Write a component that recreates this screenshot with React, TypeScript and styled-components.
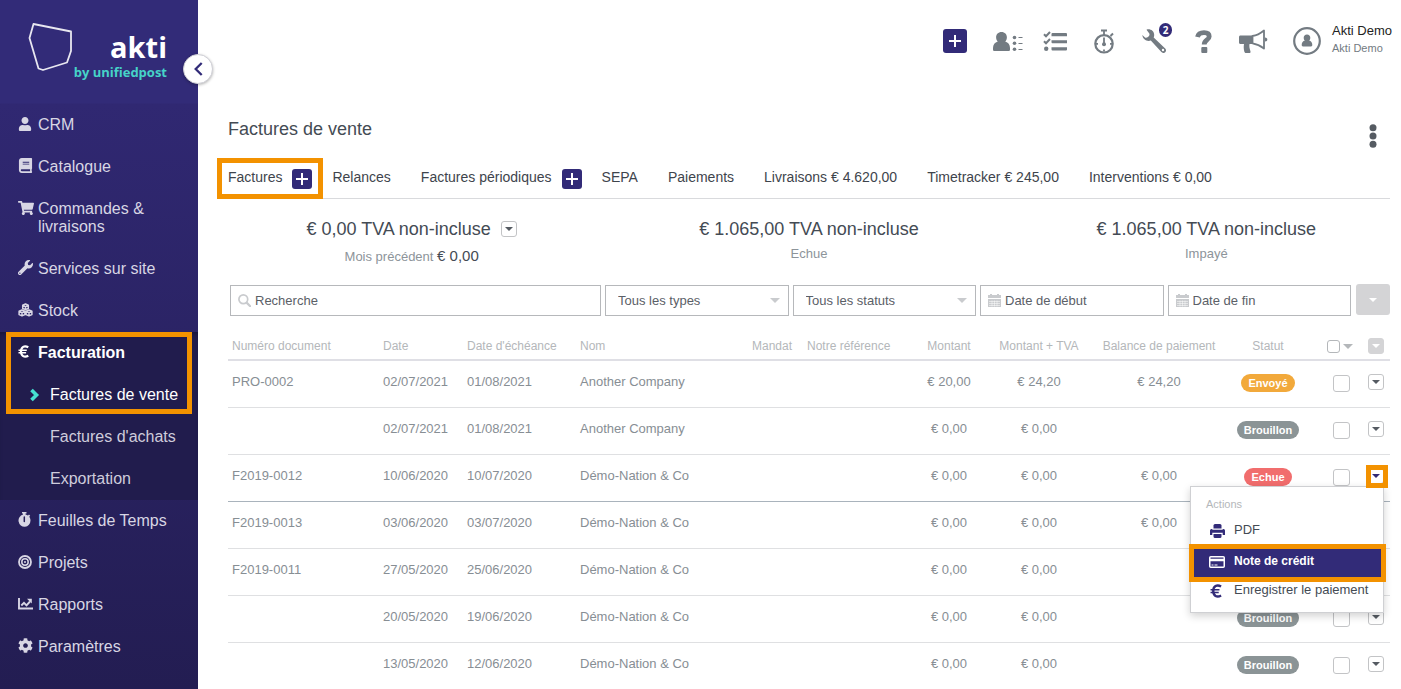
import React from "react";
import styled, { createGlobalStyle, css } from "styled-components";
import { FaUser, FaBook, FaShoppingCart, FaWrench, FaCog } from "react-icons/fa";

const sans = `"Liberation Sans", Arial, sans-serif`;
const brand = "#322b78";
const accent = "#f39200";

const GlobalStyle = createGlobalStyle`
  *, *::before, *::after { box-sizing: border-box; }
  html, body { margin: 0; background: #fff; }
  body { font-family: ${sans}; font-size: 13px; line-height: 16px; color: #444b54; overflow-x: hidden; }
  button, input, select { font: inherit; }
  a { color: inherit; text-decoration: none; }
`;

const Page = styled.div`
  display: flex;
  height: 100vh;
  overflow: hidden;
`;

/* ---------- Sidebar ---------- */

const Sidebar = styled.aside`
  position: relative;
  flex: 0 0 198px;
  background: linear-gradient(#322b78 0, #322b78 103px, #302872 104px, #231d52 100%);
`;

const Brand = styled.a`
  display: flex;
  height: 104px;
  padding: 23px 31px 0 28px;
  justify-content: space-between;
`;

const BrandShape = styled.svg`
  flex: 0 0 45px;
`;

const BrandText = styled.span`
  display: flex;
  flex-direction: column;
  align-items: flex-end;
  padding-top: 8px;
  font-family: "Open Sans", sans-serif;
  font-weight: 700;
  color: #fff;
  white-space: nowrap;
`;

const BrandName = styled.span`
  font-size: 29px;
  line-height: 32px;
`;

const BrandTag = styled.span`
  font-size: 13px;
  line-height: 18px;
  margin-left: -20px;
  color: #46d3c8;
`;

const Collapse = styled.button`
  position: absolute;
  top: 54px;
  right: -15px;
  width: 30px;
  height: 30px;
  padding: 0;
  display: grid;
  place-items: center;
  border: 1px solid #cfcfd6;
  border-radius: 50%;
  background: #fff;
  color: ${brand};
  box-shadow: 0 1px 3px rgba(0, 0, 0, 0.3);
`;

const NavLink = styled.a<{ $active?: boolean }>`
  display: flex;
  padding: 12px 8px 12px 18px;
  font-size: 16px;
  line-height: 18px;
  color: ${(p) => (p.$active ? "#fff" : "#d8d6e4")};
  font-weight: ${(p) => (p.$active ? 700 : 400)};
`;

const NavIcon = styled.span`
  display: flex;
  align-items: center;
  flex: 0 0 20px;
  height: 15px;
`;

const NavGroup = styled.div`
  position: relative;
  background: #211c4d;
  box-shadow: inset 0 4px 4px -2px rgba(0, 0, 0, 0.25);
`;

const SubLink = styled.a<{ $active?: boolean }>`
  display: flex;
  align-items: center;
  padding: 12px 0 12px 30px;
  font-size: 16px;
  line-height: 18px;
  color: ${(p) => (p.$active ? "#fff" : "#cfccdc")};
`;

const SubMark = styled.span`
  display: flex;
  flex: 0 0 20px;
  color: #46e0d0;
`;

const Highlight = styled.span<{ $top: number; $right: number; $bottom: number; $left: number }>`
  position: absolute;
  z-index: 3;
  top: ${(p) => p.$top}px;
  right: ${(p) => p.$right}px;
  bottom: ${(p) => p.$bottom}px;
  left: ${(p) => p.$left}px;
  border: 5px solid ${accent};
  pointer-events: none;
`;

/* ---------- Top bar ---------- */

const Main = styled.main`
  flex: 1;
  min-width: 0;
  padding: 0 11px 0 30px;
`;

const TopBar = styled.header`
  display: flex;
  justify-content: flex-end;
  align-items: center;
  height: 82px;
  margin-right: -2px;
  color: #737b82;
`;

const PlusButton = styled.button<{ $size: number }>`
  flex: none;
  width: ${(p) => p.$size}px;
  height: ${(p) => p.$size}px;
  padding: 0;
  display: grid;
  place-items: center;
  border: 0;
  border-radius: 3px;
  background: ${brand};
  color: #fff;
`;

const TopTools = styled.nav`
  display: flex;
  align-items: center;
  margin-right: 11px;
`;

const ToolButton = styled.button<{ $gap: number }>`
  position: relative;
  height: 30px;
  padding: 0;
  margin-left: ${(p) => p.$gap}px;
  border: 0;
  background: none;
  color: inherit;
  display: grid;
  place-items: center;
`;

const Count = styled.span`
  position: absolute;
  top: -3px;
  right: -6px;
  width: 13px;
  height: 14px;
  border-radius: 7px;
  background: ${brand};
  color: #fff;
  font: 700 10px/14px "Open Sans", sans-serif;
  text-align: center;
`;

const Account = styled.a`
  display: flex;
  flex-direction: column;
  padding-bottom: 4px;
`;

const AccountName = styled.span`
  font-size: 13px;
  line-height: 18px;
  color: #222;
`;

const AccountOrg = styled.span`
  font-size: 11px;
  line-height: 16px;
  color: #737b82;
`;

/* ---------- Heading and tabs ---------- */

const Heading = styled.div`
  display: flex;
  justify-content: space-between;
  align-items: flex-start;
  height: 76px;
  padding-top: 36px;
`;

const Title = styled.h1`
  margin: 0;
  font-size: 18px;
  line-height: 22px;
  font-weight: 400;
  color: #444b54;
`;

const MoreButton = styled.button`
  display: grid;
  place-items: center;
  width: 12px;
  height: 28px;
  margin: 4px 11px 0 0;
  padding: 0;
  border: 0;
  background: none;
  color: #555b62;
`;

const Tabs = styled.nav`
  display: flex;
  align-items: center;
  gap: 30px;
  height: 41px;
  border-bottom: 1px solid #d9dadd;
  font-size: 14px;
  color: #3e444c;
`;

const Tab = styled.div<{ $add?: boolean }>`
  position: relative;
  display: flex;
  align-items: center;
  gap: 10px;
  height: 40px;
  padding-top: 2px;
  margin-right: ${(p) => (p.$add ? -10 : 0)}px;
  white-space: nowrap;

  & > a {
    margin-bottom: 4px;
  }
`;

/* ---------- Summary ---------- */

const Summary = styled.section`
  display: grid;
  grid-template-columns: repeat(3, 1fr);
  margin: 0 -15px;
  padding-top: 19px;
  height: 86px;
  text-align: center;
`;

const Figure = styled.div`
  font-size: 18px;
  line-height: 22px;
  color: #444b54;
  display: flex;
  align-items: center;
  justify-content: center;
  gap: 10px;
`;

const FigureNote = styled.div`
  margin-top: 5px;
  font-size: 13px;
  line-height: 18px;
  color: #8d949a;
`;

const FigureNoteLow = styled(FigureNote)`
  margin-top: 7px;

  b {
    font-size: 15px;
    font-weight: 400;
    color: #444b54;
  }
`;

/* ---------- Filters ---------- */

const Filters = styled.form`
  display: flex;
  gap: 5px;
  padding-left: 2px;
`;

const FilterGrid = styled.div`
  flex: 1;
  display: grid;
  grid-template-columns: repeat(6, minmax(0, 1fr));
  gap: 4px;
`;

const Field = styled.label<{ $span?: number }>`
  grid-column: span ${(p) => p.$span || 1};
  display: flex;
  align-items: center;
  gap: 4px;
  min-width: 0;
  height: 31px;
  padding: 0 8px 0 7px;
  border: 1px solid #b6b8bb;
  color: #c9cbce;
`;

const TextInput = styled.input`
  flex: 1;
  min-width: 0;
  padding: 0;
  border: 0;
  outline: 0;
  background: none;
  color: #5b6067;

  &::placeholder {
    color: #5b6067;
    opacity: 1;
  }
`;

const Select = styled.select`
  flex: 1;
  min-width: 0;
  padding: 0 0 0 5px;
  border: 0;
  outline: 0;
  appearance: none;
  background: none;
  color: #5b6067;
`;

const FilterButton = styled.button`
  flex: 0 0 34px;
  height: 31px;
  margin-top: -1px;
  padding: 0;
  display: grid;
  place-items: center;
  border: 0;
  border-radius: 3px;
  background: #d4d4d6;
  color: #fff;
`;

/* ---------- Table ---------- */

const Table = styled.table`
  width: 100%;
  margin-top: 13px;
  border-collapse: separate;
  border-spacing: 0;
  table-layout: fixed;
`;

type Align = "left" | "center";

const Th = styled.th<{ $align?: Align }>`
  height: 32px;
  padding: 4px 0 0 ${(p) => (p.$align === "center" ? 0 : 4)}px;
  border-bottom: 2px solid #dfdfe5;
  font-size: 12px;
  line-height: 14px;
  font-weight: 400;
  text-align: ${(p) => p.$align || "left"};
  color: #b4b7ba;
  white-space: nowrap;
`;

const Row = styled.tr<{ $marked?: boolean }>`
  & > td {
    border-bottom: 1px solid ${(p) => (p.$marked ? "#a9b3bc" : "#dfe0e2")};
  }
`;

const Td = styled.td<{ $align?: Align }>`
  height: 47px;
  padding: 13px 0 0 ${(p) => (p.$align === "center" ? 0 : 4)}px;
  vertical-align: top;
  text-align: ${(p) => p.$align || "left"};
  color: #878e94;
  white-space: nowrap;
`;

const tones = { orange: "#f2a93b", grey: "#8b9496", red: "#f16d6d" };

const Badge = styled.span<{ $tone: keyof typeof tones }>`
  display: inline-block;
  height: 18px;
  padding: 0 7px;
  border-radius: 9px;
  background: ${(p) => tones[p.$tone]};
  color: #fff;
  font-size: 11px;
  line-height: 18px;
  font-weight: 700;
`;

const box = css`
  appearance: none;
  display: block;
  margin: 0;
  border: 1px solid #c3c4c6;
  border-radius: 3px;
  background: #fff;
`;

const RowCheck = styled.input`
  ${box}
  width: 17px;
  height: 17px;
  margin: 1px 0 0 26px;
`;

const HeadCheck = styled.input`
  ${box}
  width: 13px;
  height: 13px;
  border-color: #b4b7ba;
`;

const HeadCheckGroup = styled.span`
  display: flex;
  align-items: center;
  gap: 3px;
  padding-left: 20px;
`;

const CaretButton = styled.button<{ $filled?: boolean; $open?: boolean }>`
  flex: none;
  display: grid;
  place-items: center;
  width: 16px;
  height: 16px;
  padding: 0;
  border: 1px solid ${(p) => (p.$filled ? "#d4d4d6" : "#c3c4c6")};
  border-radius: 3px;
  background: ${(p) => (p.$filled ? "#d4d4d6" : "#fff")};
  color: ${(p) => (p.$filled ? "#fff" : p.$open ? brand : "#555b62")};
`;

const ActionCell = styled.div`
  position: relative;
  width: 16px;
  margin: 0 auto;
`;

const Menu = styled.div`
  position: absolute;
  z-index: 2;
  top: 18px;
  right: 0;
  width: 194px;
  height: 127px;
  padding-top: 9px;
  border: 1px solid #cfd0d3;
  background: #fff;
  box-shadow: 0 3px 8px rgba(0, 0, 0, 0.18);
  text-align: left;
`;

const MenuTitle = styled.div`
  padding-left: 15px;
  margin-bottom: 3px;
  font-size: 11px;
  line-height: 16px;
  color: #b4b7ba;
`;

const MenuItem = styled.button<{ $active?: boolean }>`
  position: relative;
  display: flex;
  align-items: center;
  width: calc(100% - 5px);
  height: ${(p) => (p.$active ? 28 : 30)}px;
  margin: ${(p) => (p.$active ? "4px 2px -2px 3px" : "0 2px 0 3px")};
  padding: 0 0 ${(p) => (p.$active ? 5 : 0)}px 15px;
  border: 0;
  background: ${(p) => (p.$active ? brand : "none")};
  color: ${(p) => (p.$active ? "#fff" : "#444b54")};
  font-size: ${(p) => (p.$active ? 12 : 13)}px;
  font-weight: ${(p) => (p.$active ? 700 : 400)};
  white-space: nowrap;
`;

const MenuIcon = styled.span<{ $active?: boolean }>`
  display: flex;
  justify-content: center;
  flex: 0 0 16px;
  margin: 2px 9px 0 0;
  color: ${(p) => (p.$active ? "#fff" : brand)};
`;

/* ---------- Drawings ---------- */

const Caret = ({ w = 8, h = 4 }: { w?: number; h?: number }) => (
  <svg width={w} height={h} viewBox="0 0 8 4" preserveAspectRatio="none" aria-hidden>
    <path d="M0 0h8L4 4z" fill="currentColor" />
  </svg>
);

const Plus = () => (
  <svg width="12" height="12" viewBox="0 0 12 12" aria-hidden>
    <path d="M6 0v12M0 6h12" stroke="currentColor" strokeWidth="2" />
  </svg>
);

const SearchIcon = () => (
  <svg width="13" height="13" viewBox="0 0 13 13" fill="none" stroke="currentColor" aria-hidden>
    <circle cx="5.300" cy="5.300" r="4.400" strokeWidth="1.700" />
    <path d="M8.600 8.600l3.600 3.600" strokeWidth="2.200" strokeLinecap="round" />
  </svg>
);

const CalendarIcon = () => (
  <svg width="13" height="13" viewBox="0 0 13 13" aria-hidden>
    <path d="M0 1h13v3H0zM2 0h2v2H2zM9 0h2v2H9zM0 5h13v8H0z" fill="currentColor" />
    <path d="M1 7.500h11M1 9.500h11M1 11.500h11M4 6.500v6M6.500 6.500v6M9 6.500v6" stroke="#fff" strokeWidth=".5" />
  </svg>
);

const ChevronMark = () => (
  <svg width="10" height="14" viewBox="0 0 10 14" aria-hidden>
    <path d="M1.500 2l5 5-5 5" fill="none" stroke="currentColor" strokeWidth="3.600" />
  </svg>
);

const ChevronBack = () => (
  <svg width="9" height="14" viewBox="0 0 9 14" aria-hidden>
    <path d="M7.700 1L1.700 7l6 6" fill="none" stroke="currentColor" strokeWidth="2.300" />
  </svg>
);

const EuroIcon = ({ size = 13 }: { size?: number }) => (
  <svg width={size} height={size} viewBox="0 0 13 13" fill="none" stroke="currentColor" aria-hidden>
    <path d="M10.300 2.300C6.300 0 3 2.200 3 6.500s3.300 6.500 7.300 4.200" strokeWidth="2.200" />
    <path d="M.5 5.300h8.300M.5 7.800h7.600" strokeWidth="1.400" />
  </svg>
);

const PrintIcon = () => (
  <svg width="15" height="14" viewBox="0 0 15 14" fill="currentColor" aria-hidden>
    <path d="M5 0h5a1.500 1.500 0 0 1 1.500 1.500V4.500h-8V1.500A1.500 1.500 0 0 1 5 0z" />
    <path d="M0 11V6.500A1.500 1.500 0 0 1 1.500 5h.8v.8h10.400V5h.8A1.500 1.500 0 0 1 15 6.500V11h-2.300V8.800H2.300V11z" />
    <path d="M3.500 10h8v2.500A1.500 1.500 0 0 1 10 14H5a1.500 1.500 0 0 1-1.500-1.500z" />
  </svg>
);

const ContactsIcon = () => (
  <svg width="31" height="22" viewBox="0 0 31 22" fill="currentColor" aria-hidden>
    <path d="M8.500 2c3.300 0 5.400 2.300 5.400 5.200 0 1.900-.6 3.300-1.700 4.300 3 1 4.800 3.100 4.800 6.500v1.500c0 1-.7 1.500-1.600 1.500H1.600C.7 21 0 20.500 0 19.500V18c0-3.400 1.800-5.500 4.800-6.500-1.100-1-1.700-2.400-1.700-4.300C3.100 4.300 5.200 2 8.500 2z" />
    <circle cx="21.500" cy="7.500" r="1.800" />
    <circle cx="21.500" cy="13.300" r="1.800" />
    <circle cx="21.500" cy="19.200" r="1.800" />
    <path d="M25.500 7h4v1h-4zM25.500 13h4v1h-4zM25.500 19h4v1h-4z" />
  </svg>
);

const ChecklistIcon = () => (
  <svg width="24" height="22" viewBox="0 0 24 22" fill="currentColor" aria-hidden>
    <path d="M9.500 3H23a1 1 0 0 1 1 1v2.200H8.500V4a1 1 0 0 1 1-1zM8.500 10.200H24v3H9.500a1 1 0 0 1-1-1zM8.500 17.200H24v2.300a1 1 0 0 1-1 1H9.500a1 1 0 0 1-1-1z" />
    <path d="M1 4.300l2 2L7 2M1 11.300l2 2L7 9" fill="none" stroke="currentColor" strokeWidth="2" />
    <circle cx="3.200" cy="18.800" r="2.200" />
  </svg>
);

const StopwatchIcon = () => (
  <svg width="22" height="25" viewBox="0 0 22 25" fill="none" stroke="currentColor" aria-hidden>
    <circle cx="11" cy="14.800" r="8.700" strokeWidth="2.200" />
    <path d="M8 1.500h6M17.500 7L20 4.500" strokeWidth="2" />
    <path d="M11 2v4M11 8.500v6M11 20.500v2M3 14.800h2M17 14.800h2" strokeWidth="1.800" />
    <circle cx="11" cy="15.300" r="2" fill="currentColor" stroke="none" />
  </svg>
);

const ToolWrenchIcon = () => (
  <svg width="24" height="24" viewBox="0 0 24 24" aria-hidden>
    <path
      d="M4.500.7c3.400-1.200 7.700 1 7.700 5.300 0 1-.2 1.700-.5 2.500l11.500 11c1.200 1.200 1 2.800 0 3.800-1.100 1-2.700 1-3.800-.2L8.800 11.600c-3.900 1.200-8-1-8.500-5.600L3 8.500c1.500 1.200 5.500-1.700 4.300-4z"
      fill="currentColor"
    />
    <circle cx="21" cy="21" r="1.200" fill="#fff" />
  </svg>
);

const QuestionIcon = () => (
  <svg width="18" height="24" viewBox="0 0 18 24" aria-hidden>
    <path d="M2.500 8C3.200 5 5.600 3.700 9 3.700c3.200 0 5.200 1.200 5.200 3.800 0 3.500-5 3.500-5 8" fill="none" stroke="currentColor" strokeWidth="4.800" />
    <rect x="6.300" y="18" width="6" height="6" rx="1" fill="currentColor" />
  </svg>
);

const MegaphoneIcon = () => (
  <svg width="29" height="25" viewBox="0 0 29 25" aria-hidden>
    <path d="M1.500 6.500H13v8.500h-2.500c-.4 2.200 0 4.500 1 7.500.2 1-.4 1.500-1.300 1.500H7c-1 0-1.500-.6-1.700-1.500-.7-3-.7-5-.3-7.500H1.500C.6 15 0 14.400 0 13.500V8c0-.9.600-1.500 1.500-1.500z" fill="currentColor" />
    <path d="M13.500 7c4.500-.6 8-2.700 11.500-5.500v18c-3.500-2.800-7-4.600-11.500-5.200z" fill="#fff" stroke="currentColor" strokeWidth="1.800" strokeLinejoin="round" />
    <path d="M26 8.500c1.800 0 2.300 1 2.300 2s-.5 2-2.300 2z" fill="currentColor" />
  </svg>
);

const AccountIcon = () => (
  <svg width="28" height="28" viewBox="0 0 28 28" aria-hidden>
    <circle cx="14" cy="14" r="12.800" fill="none" stroke="currentColor" strokeWidth="2.200" />
    <path d="M14 7.500c2.100 0 3.300 1.400 3.300 3.300 0 1.200-.4 2.200-1.200 2.800 1.900.6 3.200 1.900 3.200 4.200 0 1.200-.4 1.700-1.300 1.700h-8c-.9 0-1.300-.5-1.300-1.700 0-2.300 1.300-3.600 3.200-4.200-.8-.6-1.200-1.600-1.200-2.800 0-1.900 1.200-3.300 3.300-3.300z" fill="currentColor" />
  </svg>
);

const CubesIcon = () => (
  <svg width="15" height="14" viewBox="0 0 15 14" fill="none" stroke="currentColor" strokeWidth="1.500" strokeLinejoin="round" aria-hidden>
    <path d="M7.500 1l2.800 1.200v3.200L7.500 6.600 4.700 5.400V2.200zM4 7l2.900 1.200v3.400L4 12.800 1.100 11.600V8.200zM11 7l2.900 1.200v3.400L11 12.800l-2.900-1.200V8.200zM4.700 2.500l2.800 1.100 2.800-1.100M1.300 8.500L4 9.600l2.700-1.100M8.300 8.500L11 9.600l2.700-1.100M7.500 3.600v2.800M4 9.600v3M11 9.600v3" />
  </svg>
);

const TimerIcon = () => (
  <svg width="13" height="15" viewBox="0 0 13 15" aria-hidden>
    <path d="M4 0h4.500v1.500H7.500v1c1 .2 1.800.5 2.500 1l1-1 1.200 1.200-1 1C12 5.800 12.500 7 12.500 8.500A6 6.200 0 1 1 5 2.500v-1H4z" fill="currentColor" />
    <path d="M6.300 5v4.500" stroke="#27205a" strokeWidth="1.500" strokeLinecap="round" />
  </svg>
);

const TargetIcon = () => (
  <svg width="14" height="14" viewBox="0 0 14 14" fill="none" stroke="currentColor" strokeWidth="1.800" aria-hidden>
    <circle cx="7" cy="7" r="6" />
    <circle cx="7" cy="7" r="3.200" strokeWidth="1.500" />
    <circle cx="7" cy="7" r="1" fill="currentColor" stroke="none" />
  </svg>
);

const ChartIcon = () => (
  <svg width="15" height="12" viewBox="0 0 15 12" fill="none" stroke="currentColor" strokeWidth="1.900" aria-hidden>
    <path d="M1 0v10.500h14M3.300 7.500l2.700-2.700 2.500 2.500L12 3.500" />
    <path d="M9 .8h4.800v4.700z" fill="currentColor" stroke="none" />
  </svg>
);

const CardIcon = () => (
  <svg width="16" height="12" viewBox="0 0 16 12" aria-hidden>
    <rect x=".75" y=".75" width="14.500" height="10.500" rx="1" fill="none" stroke="currentColor" strokeWidth="1.500" />
    <path d="M1 2.800h14v2.400H1zM2.500 8.500h2v1h-2zM5.500 8.500h3v1h-3z" fill="currentColor" />
  </svg>
);

/* ---------- Data ---------- */

const navTop = [
  { label: "CRM", icon: <FaUser size={14} /> },
  { label: "Catalogue", icon: <FaBook size={15} /> },
  { label: "Commandes & livraisons", icon: <FaShoppingCart size={16} /> },
  { label: "Services sur site", icon: <FaWrench size={15} /> },
  { label: "Stock", icon: <CubesIcon /> },
];

const navBottom = [
  { label: "Feuilles de Temps", icon: <TimerIcon /> },
  { label: "Projets", icon: <TargetIcon /> },
  { label: "Rapports", icon: <ChartIcon /> },
  { label: "Paramètres", icon: <FaCog size={15} /> },
];

const tabs = [
  { label: "Factures", add: true, marked: true },
  { label: "Relances" },
  { label: "Factures périodiques", add: true },
  { label: "SEPA" },
  { label: "Paiements" },
  { label: "Livraisons € 4.620,00" },
  { label: "Timetracker € 245,00" },
  { label: "Interventions € 0,00" },
];

type Invoice = {
  no: string;
  date: string;
  due: string;
  name: string;
  amount: string;
  total: string;
  balance: string;
  status?: [string, keyof typeof tones];
  open?: boolean;
};

const draft: [string, keyof typeof tones] = ["Brouillon", "grey"];

const invoices: Invoice[] = [
  { no: "PRO-0002", date: "02/07/2021", due: "01/08/2021", name: "Another Company", amount: "€ 20,00", total: "€ 24,20", balance: "€ 24,20", status: ["Envoyé", "orange"] },
  { no: "", date: "02/07/2021", due: "01/08/2021", name: "Another Company", amount: "€ 0,00", total: "€ 0,00", balance: "", status: draft },
  { no: "F2019-0012", date: "10/06/2020", due: "10/07/2020", name: "Démo-Nation & Co", amount: "€ 0,00", total: "€ 0,00", balance: "€ 0,00", status: ["Echue", "red"], open: true },
  { no: "F2019-0013", date: "03/06/2020", due: "03/07/2020", name: "Démo-Nation & Co", amount: "€ 0,00", total: "€ 0,00", balance: "€ 0,00" },
  { no: "F2019-0011", date: "27/05/2020", due: "25/06/2020", name: "Démo-Nation & Co", amount: "€ 0,00", total: "€ 0,00", balance: "" },
  { no: "", date: "20/05/2020", due: "19/06/2020", name: "Démo-Nation & Co", amount: "€ 0,00", total: "€ 0,00", balance: "", status: draft },
  { no: "", date: "13/05/2020", due: "12/06/2020", name: "Démo-Nation & Co", amount: "€ 0,00", total: "€ 0,00", balance: "", status: draft },
];

const columns: { label: string; width?: number; align?: Align }[] = [
  { label: "Numéro document", width: 151 },
  { label: "Date", width: 84 },
  { label: "Date d'échéance", width: 113 },
  { label: "Nom" },
  { label: "Mandat", width: 55 },
  { label: "Notre référence", width: 102 },
  { label: "Montant", width: 88, align: "center" },
  { label: "Montant + TVA", width: 92, align: "center" },
  { label: "Balance de paiement", width: 148, align: "center" },
  { label: "Statut", width: 70, align: "center" },
];

const ActionsMenu = () => (
  <Menu role="menu">
    <MenuTitle>Actions</MenuTitle>
    <MenuItem role="menuitem">
      <MenuIcon><PrintIcon /></MenuIcon>
      PDF
    </MenuItem>
    <MenuItem role="menuitem" $active>
      <Highlight $top={-5} $right={-5} $bottom={-5} $left={-5} />
      <MenuIcon $active><CardIcon /></MenuIcon>
      Note de crédit
    </MenuItem>
    <MenuItem role="menuitem">
      <MenuIcon><EuroIcon size={14} /></MenuIcon>
      Enregistrer le paiement
    </MenuItem>
  </Menu>
);

export default function App() {
  return (
    <>
      <GlobalStyle />
      <Page>
        <Sidebar>
          <Brand href="#">
            <BrandShape width="45" height="49" viewBox="0 0 45 49" fill="none" stroke="#e8e7f0" strokeWidth="1.800" strokeLinejoin="round">
              <path d="M5.500 1L43 8.500V28l-4 11.500L15 47l-4.500-1.500L1.500 15z" />
            </BrandShape>
            <BrandText>
              <BrandName>akti</BrandName>
              <BrandTag>by unifiedpost</BrandTag>
            </BrandText>
          </Brand>
          <Collapse aria-label="Réduire le menu">
            <ChevronBack />
          </Collapse>
          <nav>
            {navTop.map((n) => (
              <NavLink href="#" key={n.label}>
                <NavIcon>{n.icon}</NavIcon>
                {n.label}
              </NavLink>
            ))}
            <NavGroup>
              <Highlight $top={0} $right={6} $bottom={86} $left={6} />
              <NavLink href="#" $active>
                <NavIcon><EuroIcon /></NavIcon>
                Facturation
              </NavLink>
              <SubLink href="#" $active>
                <SubMark><ChevronMark /></SubMark>
                Factures de vente
              </SubLink>
              <SubLink href="#"><SubMark />Factures d'achats</SubLink>
              <SubLink href="#"><SubMark />Exportation</SubLink>
            </NavGroup>
            {navBottom.map((n) => (
              <NavLink href="#" key={n.label}>
                <NavIcon>{n.icon}</NavIcon>
                {n.label}
              </NavLink>
            ))}
          </nav>
        </Sidebar>

        <Main>
          <TopBar>
            <TopTools>
              <PlusButton $size={24} aria-label="Ajouter"><Plus /></PlusButton>
              <ToolButton $gap={26} aria-label="Contacts"><ContactsIcon /></ToolButton>
              <ToolButton $gap={19} aria-label="Tâches"><ChecklistIcon /></ToolButton>
              <ToolButton $gap={26} aria-label="Minuterie"><StopwatchIcon /></ToolButton>
              <ToolButton $gap={27} aria-label="Outils"><ToolWrenchIcon /><Count>2</Count></ToolButton>
              <ToolButton $gap={29} aria-label="Aide"><QuestionIcon /></ToolButton>
              <ToolButton $gap={26} aria-label="Annonces"><MegaphoneIcon /></ToolButton>
              <ToolButton $gap={25} aria-label="Compte"><AccountIcon /></ToolButton>
            </TopTools>
            <Account href="#">
              <AccountName>Akti Demo</AccountName>
              <AccountOrg>Akti Demo</AccountOrg>
            </Account>
          </TopBar>

          <Heading>
            <Title>Factures de vente</Title>
            <MoreButton aria-label="Plus d'options">
              <svg width="8" height="24" viewBox="0 0 8 24" fill="currentColor" aria-hidden>
                <circle cx="4" cy="3.700" r="3.500" />
                <circle cx="4" cy="12" r="3.500" />
                <circle cx="4" cy="20.300" r="3.500" />
              </svg>
            </MoreButton>
          </Heading>

          <Tabs>
            {tabs.map((t) => (
              <Tab key={t.label} $add={t.add}>
                {t.marked && <Highlight $top={0} $right={-11} $bottom={-1} $left={-11} />}
                <a href="#">{t.label}</a>
                {t.add && <PlusButton $size={20} aria-label={`Ajouter ${t.label}`}><Plus /></PlusButton>}
              </Tab>
            ))}
          </Tabs>

          <Summary>
            <div>
              <Figure>
                € 0,00 TVA non-incluse
                <CaretButton aria-label="Période"><Caret /></CaretButton>
              </Figure>
              <FigureNoteLow>Mois précédent <b>€ 0,00</b></FigureNoteLow>
            </div>
            <div>
              <Figure>€ 1.065,00 TVA non-incluse</Figure>
              <FigureNote>Echue</FigureNote>
            </div>
            <div>
              <Figure>€ 1.065,00 TVA non-incluse</Figure>
              <FigureNote>Impayé</FigureNote>
            </div>
          </Summary>

          <Filters>
            <FilterGrid>
              <Field $span={2}>
                <SearchIcon />
                <TextInput placeholder="Recherche" aria-label="Recherche" />
              </Field>
              <Field>
                <Select aria-label="Types"><option>Tous les types</option></Select>
                <Caret w={10} h={5} />
              </Field>
              <Field>
                <Select aria-label="Statuts"><option>Tous les statuts</option></Select>
                <Caret w={10} h={5} />
              </Field>
              <Field>
                <CalendarIcon />
                <TextInput placeholder="Date de début" aria-label="Date de début" />
              </Field>
              <Field>
                <CalendarIcon />
                <TextInput placeholder="Date de fin" aria-label="Date de fin" />
              </Field>
            </FilterGrid>
            <FilterButton type="button" aria-label="Plus de filtres"><Caret /></FilterButton>
          </Filters>

          <Table>
            <colgroup>
              {columns.map((c) => <col key={c.label} width={c.width} />)}
              <col width={59} />
              <col width={28} />
            </colgroup>
            <thead>
              <tr>
                {columns.map((c) => <Th key={c.label} $align={c.align}>{c.label}</Th>)}
                <Th>
                  <HeadCheckGroup>
                    <HeadCheck type="checkbox" aria-label="Tout sélectionner" />
                    <Caret w={10} h={5} />
                  </HeadCheckGroup>
                </Th>
                <Th $align="center">
                  <ActionCell><CaretButton $filled aria-label="Colonnes"><Caret /></CaretButton></ActionCell>
                </Th>
              </tr>
            </thead>
            <tbody>
              {invoices.map((r, i) => (
                <Row key={i} $marked={r.open}>
                  <Td>{r.no}</Td>
                  <Td>{r.date}</Td>
                  <Td>{r.due}</Td>
                  <Td>{r.name}</Td>
                  <Td />
                  <Td />
                  <Td $align="center">{r.amount}</Td>
                  <Td $align="center">{r.total}</Td>
                  <Td $align="center">{r.balance}</Td>
                  <Td $align="center">{r.status && <Badge $tone={r.status[1]}>{r.status[0]}</Badge>}</Td>
                  <Td><RowCheck type="checkbox" aria-label={`Sélectionner ${r.no || r.date}`} /></Td>
                  <Td $align="center">
                    <ActionCell>
                      <CaretButton $open={r.open} aria-label="Actions"><Caret /></CaretButton>
                      {r.open && <Highlight $top={-3} $right={-4} $bottom={-4} $left={-2} />}
                      {r.open && <ActionsMenu />}
                    </ActionCell>
                  </Td>
                </Row>
              ))}
            </tbody>
          </Table>
        </Main>
      </Page>
    </>
  );
}
